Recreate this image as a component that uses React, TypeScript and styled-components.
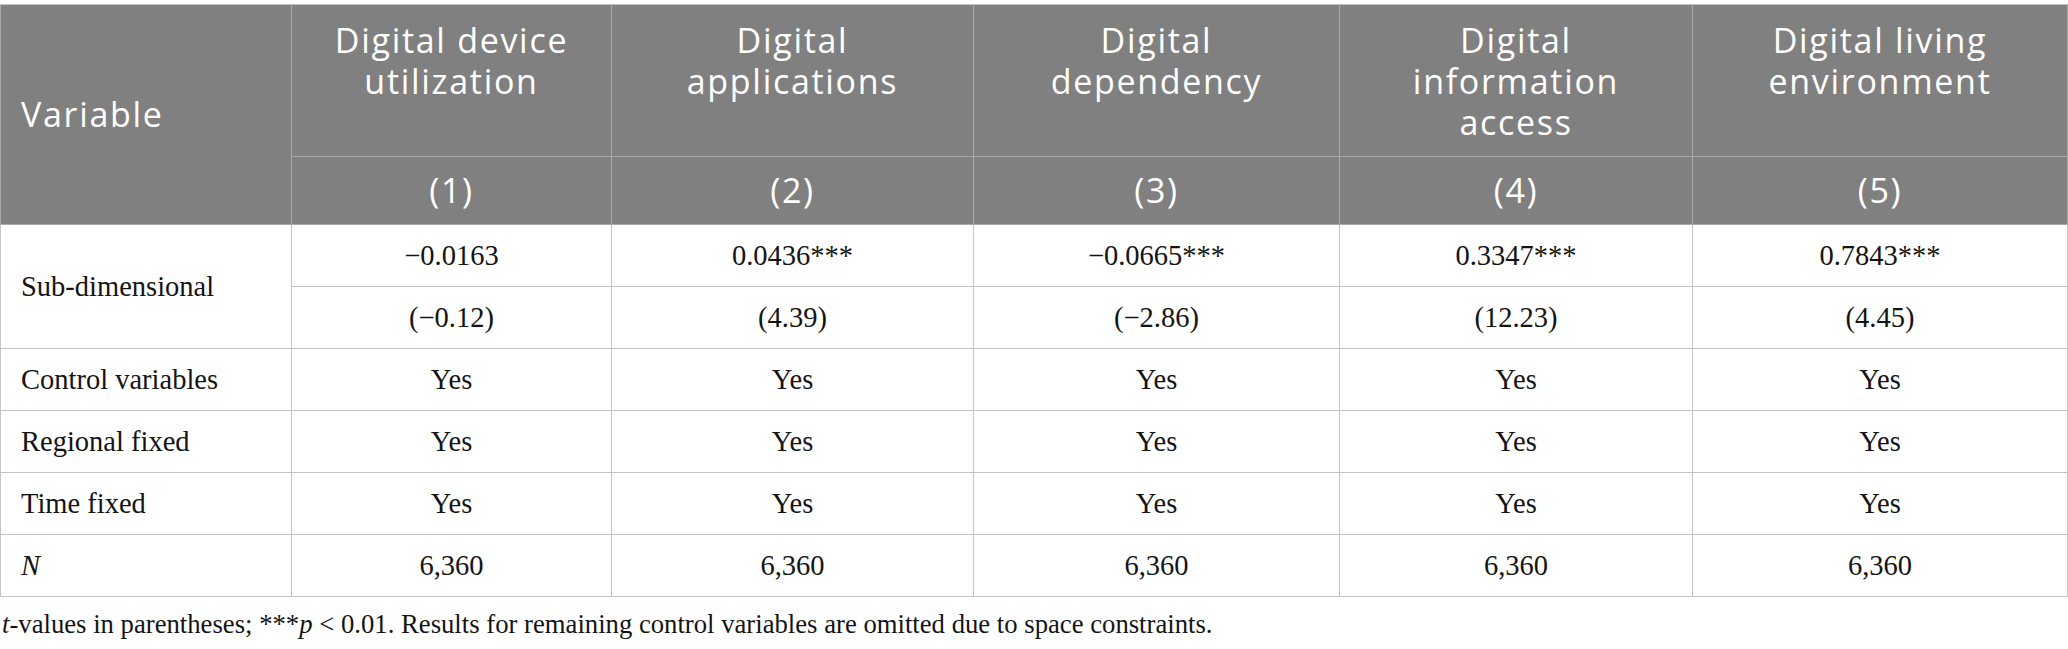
import styled, { createGlobalStyle } from "styled-components";

const GlobalStyle = createGlobalStyle`
  html, body {
    margin: 0;
    padding: 0;
    background: #ffffff;
  }
`;

const Page = styled.div`
  padding-top: 4px;
  width: 2068px;
`;

const Table = styled.table`
  width: 2067px;
  border-collapse: collapse;
  table-layout: fixed;
`;

const HeadCell = styled.th<{ $align?: string; $valign?: string; $pad?: string }>`
  background: #7f807f;
  color: #ffffff;
  font-family: "Open Sans", "Noto Sans", sans-serif;
  font-weight: 400;
  font-size: 34px;
  letter-spacing: 1.7px;
  line-height: 41px;
  text-align: ${(p) => p.$align || "center"};
  vertical-align: ${(p) => p.$valign || "top"};
  padding: ${(p) => p.$pad || "15px 20px 0"};
  border: 1px solid #a9aaa9;
  border-top-color: #c4c4c4;
`;

const Cell = styled.td<{ $align?: string; $italic?: boolean }>`
  font-family: "Liberation Serif", "Times New Roman", serif;
  font-size: 28.5px;
  color: #141414;
  text-align: ${(p) => p.$align || "center"};
  font-style: ${(p) => (p.$italic ? "italic" : "normal")};
  vertical-align: middle;
  padding: 0 20px;
  height: 61px;
  border: 1px solid #c4c4c4;
`;

const Note = styled.p`
  margin: 12px 0 0 2px;
  font-family: "Liberation Serif", "Times New Roman", serif;
  font-size: 26.7px;
  color: #141414;
`;

const columns = [291, 320, 362, 366, 353, 375];

const heads = [
  "Digital device utilization",
  "Digital applications",
  "Digital dependency",
  "Digital information access",
  "Digital living environment",
];

const coef = ["\u22120.0163", "0.0436***", "\u22120.0665***", "0.3347***", "0.7843***"];
const tvals = ["(\u22120.12)", "(4.39)", "(\u22122.86)", "(12.23)", "(4.45)"];

const rows: { label: string; values: string[]; italic?: boolean }[] = [
  { label: "Control variables", values: Array(5).fill("Yes") },
  { label: "Regional fixed", values: Array(5).fill("Yes") },
  { label: "Time fixed", values: Array(5).fill("Yes") },
  { label: "N", values: Array(5).fill("6,360"), italic: true },
];

export default function App() {
  return (
    <Page>
      <GlobalStyle />
      <Table>
        <colgroup>
          {columns.map((w, i) => (
            <col key={i} style={{ width: w }} />
          ))}
        </colgroup>
        <thead>
          <tr style={{ height: 152 }}>
            <HeadCell rowSpan={2} $align="left" $valign="middle" $pad="0 20px">
              Variable
            </HeadCell>
            {heads.map((h) => (
              <HeadCell key={h}>{h}</HeadCell>
            ))}
          </tr>
          <tr style={{ height: 68 }}>
            {heads.map((_, i) => (
              <HeadCell key={i} $valign="middle" $pad="0 20px">
                ({i + 1})
              </HeadCell>
            ))}
          </tr>
        </thead>
        <tbody>
          <tr>
            <Cell rowSpan={2} $align="left">
              Sub-dimensional
            </Cell>
            {coef.map((c, i) => (
              <Cell key={i}>{c}</Cell>
            ))}
          </tr>
          <tr>
            {tvals.map((t, i) => (
              <Cell key={i}>{t}</Cell>
            ))}
          </tr>
          {rows.map((r) => (
            <tr key={r.label}>
              <Cell $align="left" $italic={r.italic}>
                {r.label}
              </Cell>
              {r.values.map((v, i) => (
                <Cell key={i}>{v}</Cell>
              ))}
            </tr>
          ))}
        </tbody>
      </Table>
      <Note>
        <i>t</i>-values in parentheses; ***<i>p</i> &lt; 0.01. Results for remaining control
        variables are omitted due to space constraints.
      </Note>
    </Page>
  );
}
